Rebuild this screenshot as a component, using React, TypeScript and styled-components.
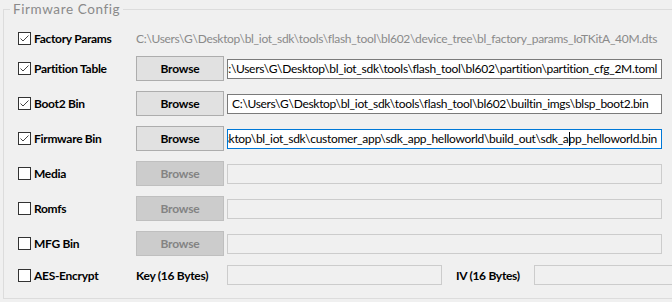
import React from 'react';
import styled, { createGlobalStyle } from 'styled-components';

const GlobalStyle = createGlobalStyle`
  html, body { margin: 0; padding: 0; background: #f0f0f0; }
  body {
    font-family: Lato, "Noto Sans", sans-serif;
    font-size: 12px;
    letter-spacing: -0.3px;
    color: #000;
  }
`;

const Page = styled.div`
  width: 672px;
  height: 302px;
  overflow: hidden;
  padding-left: 3px;
  box-sizing: border-box;
  background: #f0f0f0;
`;

const Group = styled.fieldset`
  margin: 0;
  padding: 7px 0 0 14px;
  width: 720px;
  height: 299px;
  min-width: 0;
  box-sizing: border-box;
  border: 1px solid #dcdcdc;
`;

const Legend = styled.legend`
  margin-left: -8px;
  padding: 0 3px;
  line-height: 18px;
  font-size: 13.5px;
  letter-spacing: 0.6px;
  color: #8a8a8a;
`;

const Rows = styled.div`
  display: flex;
  flex-direction: column;
`;

const Row = styled.div<{ $h: number }>`
  display: grid;
  grid-template-columns: 118px 91px 435px;
  align-items: center;
  height: ${(p) => p.$h}px;
`;

const AesRow = styled.div<{ $h: number }>`
  display: grid;
  grid-template-columns: 118px 91px 215px 14px 78px 200px;
  align-items: center;
  height: ${(p) => p.$h}px;
`;

const CheckLabel = styled.label`
  display: flex;
  align-items: center;
  gap: 3px;
  font-weight: bold;
  white-space: nowrap;
`;

const Box = styled.span`
  width: 13px;
  height: 13px;
  box-sizing: border-box;
  border: 1px solid #333333;
  background: #ffffff;
  display: inline-flex;
  align-items: center;
  justify-content: center;
  flex-shrink: 0;
`;

const FieldLabel = styled.span`
  font-weight: bold;
  white-space: nowrap;
`;

const GreyPath = styled.span`
  grid-column: 2 / span 2;
  color: #8a8a8a;
  white-space: nowrap;
`;

const Button = styled.button`
  width: 88px;
  height: 25px;
  box-sizing: border-box;
  border: 1px solid #adadad;
  background: #e1e1e1;
  color: #000;
  font-family: inherit;
  font-size: 12px;
  font-weight: bold;
  letter-spacing: -0.2px;
  padding: 0;
  &:disabled {
    background: #cccccc;
    border-color: #bfbfbf;
    color: #838383;
  }
`;

type FieldState = 'normal' | 'focus' | 'disabled';

const Field = styled.div<{ $state: FieldState; $w?: number }>`
  width: ${(p) => p.$w ?? 435}px;
  height: 20px;
  box-sizing: border-box;
  border: 1px solid
    ${(p) => (p.$state === 'focus' ? '#0078d7' : p.$state === 'disabled' ? '#cccccc' : '#7a7a7a')};
  background: ${(p) => (p.$state === 'disabled' ? '#f0f0f0' : '#ffffff')};
  overflow: hidden;
  display: flex;
  justify-content: flex-end;
  align-items: center;
  padding: 0 4px 0 4px;
`;

const FieldText = styled.span`
  flex-shrink: 0;
  min-width: 100%;
  white-space: nowrap;
  color: #000;
`;

const Caret = styled.span`
  display: inline-block;
  width: 1px;
  height: 14px;
  margin-right: -1px;
  background: #000;
  vertical-align: -3px;
`;

const Check: React.FC<{ on: boolean }> = ({ on }) => (
  <Box>
    {on && (
      <svg width="11" height="11" viewBox="0 0 11 11">
        <polyline points="1.5,5.5 4,8 9.5,2.5" fill="none" stroke="#444" strokeWidth="1" />
      </svg>
    )}
  </Box>
);

const rows: { label: string; on: boolean; path: string; state: FieldState; caret?: string; h: number }[] = [
  {
    label: 'Partition Table',
    on: true,
    path: 'C:\\Users\\G\\Desktop\\bl_iot_sdk\\tools\\flash_tool\\bl602\\partition\\partition_cfg_2M.toml',
    state: 'normal',
    h: 35,
  },
  {
    label: 'Boot2 Bin',
    on: true,
    path: 'C:\\Users\\G\\Desktop\\bl_iot_sdk\\tools\\flash_tool\\bl602\\builtin_imgs\\blsp_boot2.bin',
    state: 'normal',
    h: 35,
  },
  {
    label: 'Firmware Bin',
    on: true,
    path: 'C:\\Users\\G\\Desktop\\bl_iot_sdk\\customer_app\\sdk_app_helloworld\\build_out\\sdk_a',
    caret: 'pp_helloworld.bin',
    state: 'focus',
    h: 35,
  },
  { label: 'Media', on: false, path: '', state: 'disabled', h: 35 },
  { label: 'Romfs', on: false, path: '', state: 'disabled', h: 35 },
  { label: 'MFG Bin', on: false, path: '', state: 'disabled', h: 35 },
];

export default function App() {
  return (
    <>
      <GlobalStyle />
      <Page>
        <Group>
          <Legend>Firmware Config</Legend>
          <Rows>
            <Row $h={26}>
              <CheckLabel>
                <Check on />
                Factory Params
              </CheckLabel>
              <GreyPath>
                C:\Users\G\Desktop\bl_iot_sdk\tools\flash_tool\bl602\device_tree\bl_factory_params_IoTKitA_40M.dts
              </GreyPath>
            </Row>
            {rows.map((r) => (
              <Row key={r.label} $h={r.h}>
                <CheckLabel>
                  <Check on={r.on} />
                  {r.label}
                </CheckLabel>
                <Button disabled={r.state === 'disabled'}>Browse</Button>
                <Field $state={r.state}>
                  <FieldText>
                    {r.path}
                    {r.caret !== undefined && (
                      <>
                        <Caret />
                        {r.caret}
                      </>
                    )}
                  </FieldText>
                </Field>
              </Row>
            ))}
            <AesRow $h={28}>
              <CheckLabel>
                <Check on={false} />
                AES-Encrypt
              </CheckLabel>
              <FieldLabel>Key (16 Bytes)</FieldLabel>
              <Field $state="disabled" $w={215} />
              <span />
              <FieldLabel>IV (16 Bytes)</FieldLabel>
              <Field $state="disabled" $w={200} />
            </AesRow>
          </Rows>
        </Group>
      </Page>
    </>
  );
}
